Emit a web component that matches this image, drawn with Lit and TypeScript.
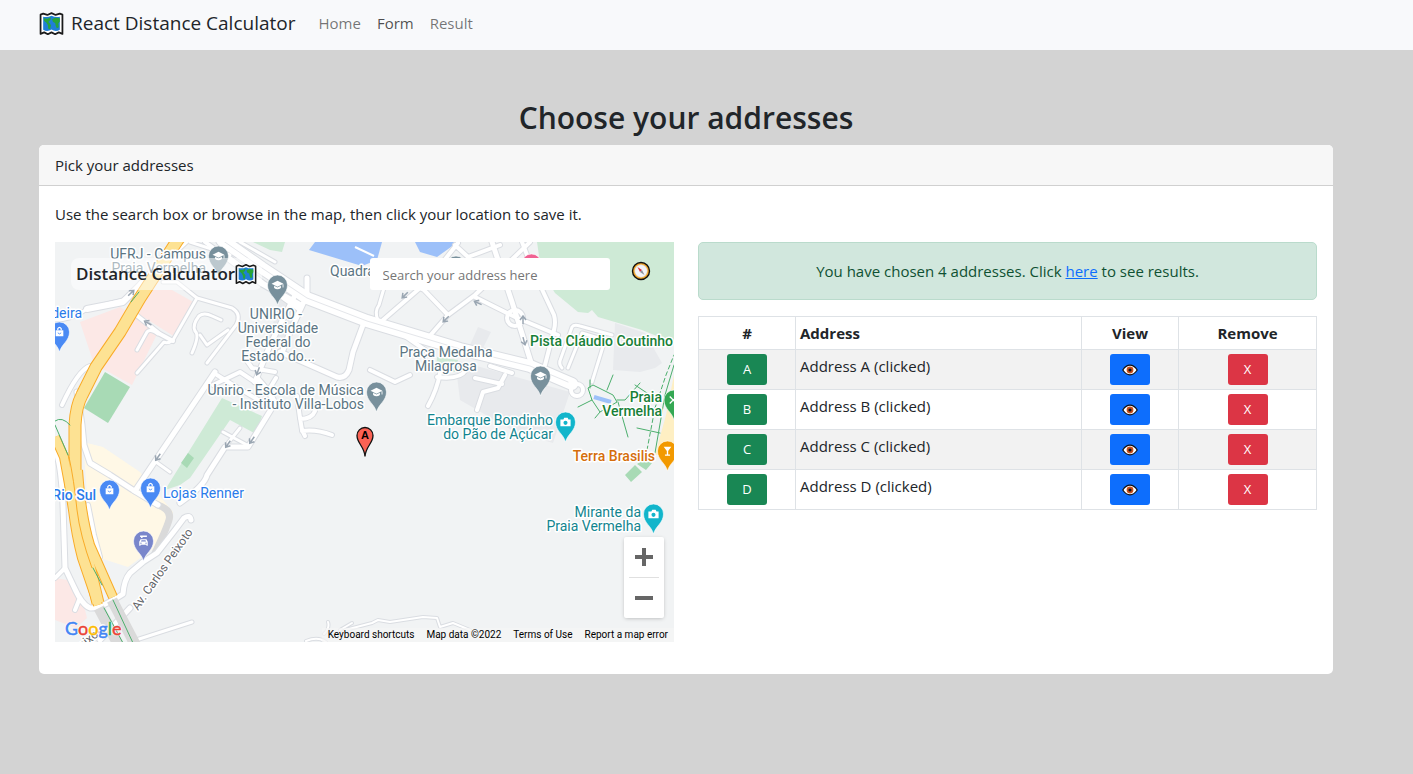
import { LitElement, html, svg, css } from "lit";
import { customElement, property, state } from "lit/decorators.js";

const worldMap = html`<svg class="world" viewBox="0 0 24 24" aria-hidden="true">
  <path d="M1.500 3.500L4 2.500 8 3.800 12 2 16 3.800 20 2.500 22.500 3.500V22L19 20.500 15.500 22.300 12 20.500 8.500 22.300 5 20.500 1.500 22z" fill="#fff" stroke="#1b1b1b" stroke-width="1.700" stroke-linejoin="round"/>
  <path d="M4 5.500Q8 6.500 12 4.500 16 6.500 20 5.500V18Q16 20.500 12 17.800 8 20.500 4 18z" fill="#1f7fd6"/>
  <path d="M4.500 7l3.500.5 3.500-1.500-.5 2.500-2 2 1.500 1.500 1 2-1 3.500-1.500-.5-.5-3.500-1.500-2.500-2-1.500z" fill="#27a53a"/>
  <path d="M12.500 8l3-1.500 4.500.5v3l-1.500 2 .5 3.500-2 1-1-2.500-.5-2.500-2-1z" fill="#27a53a"/>
</svg>`;

const eye = html`<svg class="eye" viewBox="0 0 16 12" aria-hidden="true">
  <path d="M.8 6C3 2.600 5.400 1.200 8 1.200S13 2.600 15.200 6C13 9.400 10.600 10.800 8 10.800S3 9.400.8 6z" fill="#fff" stroke="#111" stroke-width="1.200"/>
  <circle cx="8" cy="6" r="3.400" fill="#c8501e"/><circle cx="8" cy="6" r="1.600" fill="#111"/>
</svg>`;

const compass = html`<svg class="compass" viewBox="0 0 20 20" aria-hidden="true">
  <circle cx="10" cy="10" r="8.500" fill="#f5a623" stroke="#111" stroke-width="1.400"/>
  <circle cx="10" cy="10" r="6.200" fill="#f4f4f8" stroke="#d9dbe2" stroke-width=".6"/>
  <path d="M6.500 6l4.500 3-2 2z" fill="#e02f3c"/><path d="M13.500 14l-4.500-3 2-2z" fill="#8c919c"/>
</svg>`;

type Road = [number, string];

const roads: Road[] = [
  [3, "M55 320 Q72 320 87 309 L123 300 138 287 187 242"],
  [6, "M87 309 L123 302 140 285 172 250"],
  [3, "M163 282H177L197 298 232 308Q242 314 236 325L207 363"],
  [3, "M197 298L173 340Q168 344 164 342L137 373"],
  [4, "M135 314L160 334 173 341"],
  [3, "M137 350L147 332Q150 328 158 334"],
  [3, "M192 353Q200 335 195 331 192 325 199 316 204 312 212 316L221 320"],
  [3, "M228 330L207 345 200 335"],
  [3, "M190 242L230 255M240 242L275 262"],
  [4, "M205 242L262 283 300 310"],
  [4, "M455 245L468 257 500 245M458 243L427 282 383 320"],
  [4, "M428 338L448 315 475 295 500 271 530 242"],
  [4, "M413 285L424 290 448 315"],
  [4, "M475 297L515 317 558 335"],
  [5, "M492 242L512 302 524 340 534 372"],
  [4, "M522 242L532 268 554 315Q556 322 554 330L545 365"],
  [5, "M363 325L353 352 349 370Q345 379 337 377L303 362 280 352"],
  [5, "M307 278V295L290 332 283 350"],
  [5, "M296 293L270 345 255 382"],
  [4, "M245 358L252 368 275 372M270 388L276 378"],
  [3, "M378 320Q374 312 379 305L384 288"],
  [4, "M255 382L240 372 213 385M217 375L233 385 262 402"],
  [5, "M257 378Q270 392 275 403L248 447H225L207 475Q205 485 180 503"],
  [3, "M223 432L247 445M240 428L228 443"],
  [5, "M215 372L135 491"],
  [3, "M156 462L170 472"],
  [4, "M297 396L300 418 302 430 305 436M300 419Q312 419 315 411M302 431Q316 429 332 435"],
  [4, "M440 373Q437 390 428 406M437 377Q460 380 466 370"],
  [4, "M505 375L498 388 483 392 477 410M475 378L502 384M490 366L512 373"],
  [4, "M405 336L425 350M370 370L395 382 410 375"],
  [3, "M562 368Q558 364 561 358L572 327Q574 324 580 326L612 335M568 368L582 333 605 340 592 382"],
  [4, "M62 405Q78 370 90 366"],
  [5, "M77 392L82 425 84 445 90 463 110 475 133 490 158 505"],
  [5, "M55 450Q61 462 63 505L65 568 74 587Q82 605 90 608 100 609 123 594 124 580 130 573L143 562 157 553 175 530 184 518Q190 514 191 520"],
  [4, "M88 505L94 535 100 557"],
  [5, "M130 608L100 640"],
  [4, "M75 610L79 600M55 578L65 568"],
  [3, "M130 642L192 622"],
  [2, "M306 641Q318 636 326 642M328 622Q330 628 324 634M340 630L352 623M345 630L372 623 378 620 390 622 423 617 437 618 440 627 453 623 470 630"],
];

const avenues: Road[] = [
  [12, "M222 240L262 268 307 298 367 321 460 349 530 366 572 384"],
  [6, "M300 305L263 284 220 252"],
];

const highways = [
  "M179 238L140 298 120 332 96 367 82 395Q76 406 75 425V475Q77 515 84 545L98 603",
];
const strands = [
  "M55 437L64 457Q69 482 73 510 76 535 82 558L98 605",
  "M78 470Q81 515 90 545L113 597",
];

const arrow = (x: number, y: number, deg: number) => svg`
  <path transform="translate(${x} ${y}) rotate(${deg})" d="M-4 0H3M0-3L4 0 0 3" fill="none" stroke="#9aa6b2" stroke-width="1.500"/>`;

const glyphs: Record<string, unknown> = {
  school: svg`<path d="M0-5L7-1.500 0 2-7-1.500zM-4 1L0 3 4 1V3.500Q0 6.500-4 3.500zM6-1H7V3H6z" fill="#fff"/>`,
  bag: svg`<path d="M-4.500-2H4.500V5H-4.500z" fill="#fff"/><path d="M-2-2V-4Q0-7 2-4V-2" fill="none" stroke="#fff" stroke-width="1.400"/><path d="M-2 1Q0 3.500 2 1" fill="none" stroke="#4a8af4"/>`,
  camera: svg`<path d="M-6-3H-2.500L-1.500-5H2.500L3.500-3H6V5H-6z" fill="#fff"/><circle cx="0" cy="1" r="2.400" fill="#12b5cb"/>`,
  glass: svg`<path d="M-4.500-5H4.500L.8 0V4H3V5.500H-3V4H-.8V0z" fill="#fff"/>`,
  car: svg`<path d="M-5 1L-3.500-2H3.500L5 1V5.500H3.500V4.500H-3.500V5.500H-5z" fill="#fff"/><path d="M-3 .5L-2.300-1H2.300L3 .5z" fill="#7986cb"/><circle cx="-3" cy="2.500" r=".8" fill="#7986cb"/><circle cx="3" cy="2.500" r=".8" fill="#7986cb"/><path d="M-4-5.500H4M-2-5V-3.500" stroke="#fff" stroke-width="1.800"/>`,
  fork: svg`<path d="M-5-4L3 4M-5 4L0-1" stroke="#fff" stroke-width="1.600"/>`,
  none: svg``,
};

const pins: [number, number, string, string][] = [
  [218.5, 256, "#78909c", "school"],
  [277.5, 285, "#78909c", "school"],
  [376.5, 392, "#78909c", "school"],
  [540.5, 376, "#78909c", "school"],
  [456, 266, "#78909c", "none"],
  [531.5, 264, "#f06292", "none"],
  [565.5, 422, "#12b5cb", "camera"],
  [653.5, 514, "#12b5cb", "camera"],
  [667.5, 451, "#f29900", "glass"],
  [674, 400, "#34a853", "fork"],
  [59.5, 332, "#4a8af4", "bag"],
  [109.5, 490, "#4a8af4", "bag"],
  [150.5, 488, "#4a8af4", "bag"],
  [143.5, 541, "#7986cb", "car"],
];

const labels: [number, number, string, string, string][] = [
  [206, 259, "end", "place", "UFRJ - Campus"],
  [206, 273, "end", "place", "Praia Vermelha"],
  [82, 318, "end", "shop", "Madeira"],
  [330, 276, "start", "place", "Quadra de"],
  [276, 319, "middle", "place", "UNIRIO -"],
  [278, 333, "middle", "place", "Universidade"],
  [278, 347, "middle", "place", "Federal do"],
  [278, 361, "middle", "place", "Estado do..."],
  [446, 357, "middle", "place", "Praça Medalha"],
  [446, 371, "middle", "place", "Milagrosa"],
  [364, 395, "end", "place", "Unirio - Escola de Música"],
  [364, 409, "end", "place", "- Instituto Villa-Lobos"],
  [673, 346, "end", "park", "Pista Cláudio Coutinho"],
  [662, 402, "end", "park", "Praia"],
  [662, 416, "end", "park", "Vermelha"],
  [553, 425, "end", "sight", "Embarque Bondinho"],
  [553, 439, "end", "sight", "do Pão de Açúcar"],
  [655, 461, "end", "food", "Terra Brasilis"],
  [641, 517, "end", "sight", "Mirante da"],
  [641, 531, "end", "sight", "Praia Vermelha"],
  [96, 500, "end", "shop bold", "Rio Sul"],
  [163, 498, "start", "shop", "Lojas Renner"],
];

@customElement("distance-map")
export class DistanceMap extends LitElement {
  static styles = css`
    :host { display: block; position: relative; height: 400px; overflow: hidden; background: #f1f3f4; color: #212529; }
    .canvas { display: block; width: 100%; height: 100%; }
    .label { font: 14px Roboto, sans-serif; stroke: #fff; stroke-width: 3px; stroke-linejoin: round; paint-order: stroke; }
    .place { fill: #5b7583; }
    .shop { fill: #2a7bea; }
    .bold { font-weight: 500; }
    .park { fill: #188038; font-weight: 500; }
    .sight { fill: #12858f; }
    .food { fill: #d56e0c; font-weight: 500; }
    .street { fill: #5f6368; font-size: 12px; }
    .letter { font: 700 11px "Liberation Sans", sans-serif; text-anchor: middle; }
    .title { position: absolute; left: 16px; top: 16px; height: 32px; padding: 0 5px; box-sizing: border-box; display: flex; align-items: center; border-radius: 8px; background: rgba(255, 255, 255, 0.5); font: 600 17px/24px "Open Sans", sans-serif; }
    .world { width: 22px; height: 22px; }
    .search { position: absolute; left: calc(50% + 5px); top: 16px; width: 240px; height: 32px; box-sizing: border-box; border: 0; border-radius: 3px; padding: 2px 13px 0; background: #fff; font: 13px "Open Sans", sans-serif; color: #212529; }
    .search::placeholder { color: #757575; opacity: 1; }
    .locate { position: absolute; right: 23px; top: 19px; width: 20px; height: 20px; padding: 0; border: 0; background: none; cursor: pointer; }
    .compass { display: block; width: 20px; height: 20px; }
    .zoom { position: absolute; right: 10px; bottom: 24px; width: 40px; display: flex; flex-direction: column; align-items: center; background: #fff; border-radius: 2px; box-shadow: 0 1px 4px -1px rgba(0, 0, 0, 0.3); }
    .step { width: 40px; height: 40px; padding: 0; border: 0; background: none; display: grid; place-items: center; cursor: pointer; }
    .step svg { width: 18px; height: 18px; fill: #666; }
    .rule { width: 30px; height: 1px; background: #e0e0e0; }
    .logo { position: absolute; left: 10px; bottom: 3px; font: 18px/22px Lato, sans-serif; text-decoration: none; text-shadow: 0 0 2px #fff, 1px 0 1px #fff, -1px 0 1px #fff; -webkit-text-stroke: 0.5px; }
    .b { color: #4285f4; } .r { color: #ea4335; } .y { color: #fbbc04; } .g { color: #34a853; }
    .legal { position: absolute; right: 0; bottom: 0; display: flex; gap: 12px; padding: 0 6px; background: rgba(245, 245, 245, 0.7); font: 10px/14px Roboto, sans-serif; color: #000; }
    .legal a, .legal button { color: inherit; font: inherit; text-decoration: none; border: 0; padding: 0; background: none; }
  `;

  @property() marker = "A";

  render() {
    const lines = (set: Road[], color: string, extra: number) =>
      set.map(([w, d]) => svg`<path d=${d} stroke=${color} stroke-width=${w + extra}></path>`);
    return html`
      <svg class="canvas" viewBox="55 242 619 400" preserveAspectRatio="xMidYMid slice" role="img" aria-label="Map">
        <rect x="55" y="242" width="619" height="400" fill="#f1f3f4"/>
        <g fill="#e8eaed">
          <path d="M478 327L491 332 483 348 470 345z"/>
          <path d="M615 323L645 333 662 363 655 368 640 372 613 370z"/>
          <path d="M455 360L570 392 553 443 515 432 460 400z"/>
          <path d="M283 290L300 298 285 345 268 340z"/>
        </g>
        <g fill="#fce8e6">
          <path d="M147 290H172L195 303 175 337 137 313z"/>
          <path d="M80 322L120 307 158 332 132 385 105 370 95 367z"/>
          <path d="M55 578L67 580 85 610 87 618 76 628 55 620z"/>
        </g>
        <path d="M83 442L103 447 140 472 173 512 165 540 128 567 100 558 88 505z" fill="#fff8e6"/>
        <g fill="#ceead6">
          <path d="M537 242H674V343L642 330 598 317 592 310 588 313 578 312 555 293 541 270z"/>
          <path d="M253 242H285L282 252 270 250z"/>
          <path d="M222 398L262 416 256 434 230 420 190 478 180 485 165 490z"/>
          <path d="M437 357L458 360 455 372 436 368z"/>
        </g>
        <g fill="#a8dab5">
          <path d="M105 372L130 387 108 423 84 408z"/>
          <path d="M188 453L194 458 187 468 181 463z"/>
          <path d="M625 475L635 465 642 472 631 482zM637 464L643 460 652 463 646 470z"/>
        </g>
        <g fill="#9cc0f9">
          <path d="M315 242L309 250 362 266 377 260 382 242z"/>
          <path d="M415 242L420 252 437 257 458 242z"/>
        </g>
        <path d="M355 247L374 256" stroke="#fff" stroke-width="2"/>
        <path d="M674 375L666 415 655 455H674z" fill="#feefc3"/>
        <g fill="none" stroke-linecap="round" stroke-linejoin="round">
          <path d="M158 505Q172 510 169 520T155 553" stroke="#dadada" stroke-width="7"/>
          ${lines(roads, "#dadde2", 2)}
          ${lines(avenues, "#dadde2", 2)}
          <circle cx="515" cy="318" r="8" stroke="#dadde2" stroke-width="6"/>
          <circle cx="577" cy="390" r="6" stroke="#dadde2" stroke-width="6"/>
          ${lines(roads, "#fff", 0)}
          ${lines(avenues, "#fff", 0)}
          <circle cx="515" cy="318" r="8" stroke="#fff" stroke-width="4"/>
          <circle cx="577" cy="390" r="6" stroke="#fff" stroke-width="4"/>
          <path d="M222 240L262 268 307 298 367 321 460 349 530 366 568 382" stroke="#e4e6ea" stroke-width="1"/>
          <path d="M99 608L119 646M112 600L136 646" stroke="#dadada" stroke-width="11" stroke-linecap="butt"/>
          <g stroke-linecap="butt">
            ${highways.map((d) => svg`<path d=${d} stroke="#f9ab28" stroke-width="13"></path>`)}
            ${strands.map((d) => svg`<path d=${d} stroke="#f9ab28" stroke-width="10"></path>`)}
            ${highways.map((d) => svg`<path d=${d} stroke="#fde293" stroke-width="11"></path>`)}
            ${strands.map((d) => svg`<path d=${d} stroke="#fde293" stroke-width="8"></path>`)}
            <path d="M69 457Q74 480 77 510 80 535 92 568" stroke="#f9ab28" stroke-width="1"/>
          </g>
          <path d="M594 397L611 402" stroke="#9cc0f9" stroke-width="4" stroke-linecap="butt"/>
          <g stroke="#4caf6d" stroke-width="1">
            <path d="M55 425L68 455M55 421Q62 416 70 425M131 302L139 292M93 568L102 585M104 608L123 643M113 600L133 643"/>
            <path d="M578 407L592 400 588 388 593 385 613 395 617 402 600 412 592 400M595 418L600 412M618 402L628 437M617 400H625L640 383M607 390L613 375M590 388V380M637 428L660 433M655 453L665 395 674 365M650 395L635 385"/>
            <path d="M647 450L655 408 666 375 674 355" stroke-dasharray="4 3"/>
          </g>
        </g>
        ${arrow(131, 293, -45)}${arrow(148, 323, 210)}${arrow(405, 295, 135)}${arrow(446, 319, 135)}
        ${arrow(478, 303, 205)}${arrow(523, 320, -90)}${arrow(524, 341, 75)}${arrow(258, 371, 110)}
        ${arrow(158, 457, 125)}${arrow(228, 444, 125)}${arrow(252, 440, 125)}
        <g>
          ${pins.map(([x, y, color, glyph]) => svg`
            <g transform="translate(${x} ${y})">
              <path d="M0 20C-2 12-10 9-10 0A10 10 0 0 1 10 0C10 9 2 12 0 20z" fill=${color} stroke="#fff" stroke-width=".6"></path>
              <g transform="scale(.85)">${glyphs[glyph]}</g>
            </g>`)}
        </g>
        ${labels.map(([x, y, anchor, kind, text]) => svg`<text class="label ${kind}" x=${x} y=${y} text-anchor=${anchor}>${text}</text>`)}
        <text class="label street" transform="translate(138 611) rotate(-55)">Av. Carlos Peixoto</text>
        <text class="label street" transform="translate(76 654) rotate(-38)">Peixoto</text>
        <g transform="translate(365 436)">
          <path d="M0 20.500C-.8 10-8 7.500-8-.500A8 8 0 0 1 8-.5C8 7.500.8 10 0 20.500z" fill="#fb6254" stroke="#111" stroke-width="1.300"/>
          <text class="letter" y="3">${this.marker}</text>
        </g>
      </svg>
      <div class="title">Distance Calculator${worldMap}</div>
      <input class="search" type="text" placeholder="Search your address here" aria-label="Search your address here" />
      <button class="locate" aria-label="Use my location">${compass}</button>
      <div class="zoom">
        <button class="step" aria-label="Zoom in"><svg viewBox="0 0 18 18"><path d="M7 0h4v7h7v4h-7v7H7v-7H0V7h7z"/></svg></button>
        <span class="rule"></span>
        <button class="step" aria-label="Zoom out"><svg viewBox="0 0 18 18"><path d="M0 7h18v4H0z"/></svg></button>
      </div>
      <a class="logo" href="#map"><span class="b">G</span><span class="r">o</span><span class="y">o</span><span class="b">g</span><span class="g">l</span><span class="r">e</span></a>
      <div class="legal">
        <button>Keyboard shortcuts</button><span>Map data ©2022</span><a href="#terms">Terms of Use</a><a href="#report">Report a map error</a>
      </div>`;
  }
}

@customElement("app-root")
export class AppRoot extends LitElement {
  static styles = css`
    :host { display: block; min-height: 100vh; background: #d3d3d3; color: #212529; font: 15px/24px "Open Sans", "Noto Sans", sans-serif; }
    .nav { display: flex; align-items: center; gap: 23px; height: 50px; padding: 0 39px 4px; box-sizing: border-box; background: #f8f9fb; }
    .brand { display: flex; align-items: center; gap: 7px; color: #212529; text-decoration: none; font-size: 19px; }
    .world { width: 25px; height: 25px; }
    .links { display: flex; gap: 16px; }
    .link { color: rgba(0, 0, 0, 0.55); text-decoration: none; }
    .link.active { color: rgba(0, 0, 0, 0.7); }
    .page { padding: 49px 80px 48px 39px; }
    .heading { margin: 0 0 8px; font-size: 30px; line-height: 38px; font-weight: 600; text-align: center; }
    .card { background: #fff; border-radius: 5px; overflow: hidden; }
    .card-head { padding: 8px 16px; background: #f7f7f7; border-bottom: 1px solid #d0d0d0; }
    .card-body { padding: 16px 16px 32px; }
    .hint { margin: 0 0 16px; }
    .columns { display: grid; grid-template-columns: 1fr 1fr; gap: 24px; }
    .alert { padding: 16px; margin-bottom: 16px; border: 1px solid #badbcc; border-radius: 5px; background: #d1e7dd; color: #0f5132; text-align: center; }
    .alert a { color: #0d6efd; }
    .table { width: 100%; border-collapse: collapse; table-layout: fixed; }
    .table th, .table td { box-sizing: border-box; border: 1px solid #dee2e6; padding: 4px; text-align: center; vertical-align: top; }
    .table .address { text-align: left; }
    .table tbody tr:nth-child(odd) { background: #f2f2f2; }
    .narrow { width: 97px; }
    .wide { width: 138px; }
    .btn { display: inline-flex; align-items: center; justify-content: center; vertical-align: top; width: 40px; height: 31px; padding: 0; border: 0; border-radius: 3px; color: #fff; font: 13px/21px "Open Sans", sans-serif; cursor: pointer; }
    .success { background: #198754; }
    .primary { background: #0d6efd; }
    .danger { background: #dc3545; }
    .eye { width: 16px; height: 12px; }
  `;

  @state() private rows = ["A", "B", "C", "D"];

  private remove(letter: string) {
    this.rows = this.rows.filter((row) => row !== letter);
  }

  render() {
    return html`
      <nav class="nav">
        <a class="brand" href="#">${worldMap}<span>React Distance Calculator</span></a>
        <div class="links">
          <a class="link" href="#home">Home</a>
          <a class="link active" href="#form">Form</a>
          <a class="link" href="#result">Result</a>
        </div>
      </nav>
      <main class="page">
        <h1 class="heading">Choose your addresses</h1>
        <section class="card">
          <div class="card-head">Pick your addresses</div>
          <div class="card-body">
            <p class="hint">Use the search box or browse in the map, then click your location to save it.</p>
            <div class="columns">
              <distance-map></distance-map>
              <div>
                <div class="alert" role="alert">You have chosen ${this.rows.length} addresses. Click <a href="#result">here</a> to see results.</div>
                <table class="table">
                  <thead>
                    <tr><th class="narrow">#</th><th class="address">Address</th><th class="narrow">View</th><th class="wide">Remove</th></tr>
                  </thead>
                  <tbody>
                    ${this.rows.map((row) => html`<tr>
                      <td><button class="btn success">${row}</button></td>
                      <td class="address">Address ${row} (clicked)</td>
                      <td><button class="btn primary" aria-label="View address ${row}">${eye}</button></td>
                      <td><button class="btn danger" @click=${() => this.remove(row)}>X</button></td>
                    </tr>`)}
                  </tbody>
                </table>
              </div>
            </div>
          </div>
        </section>
      </main>`;
  }
}
